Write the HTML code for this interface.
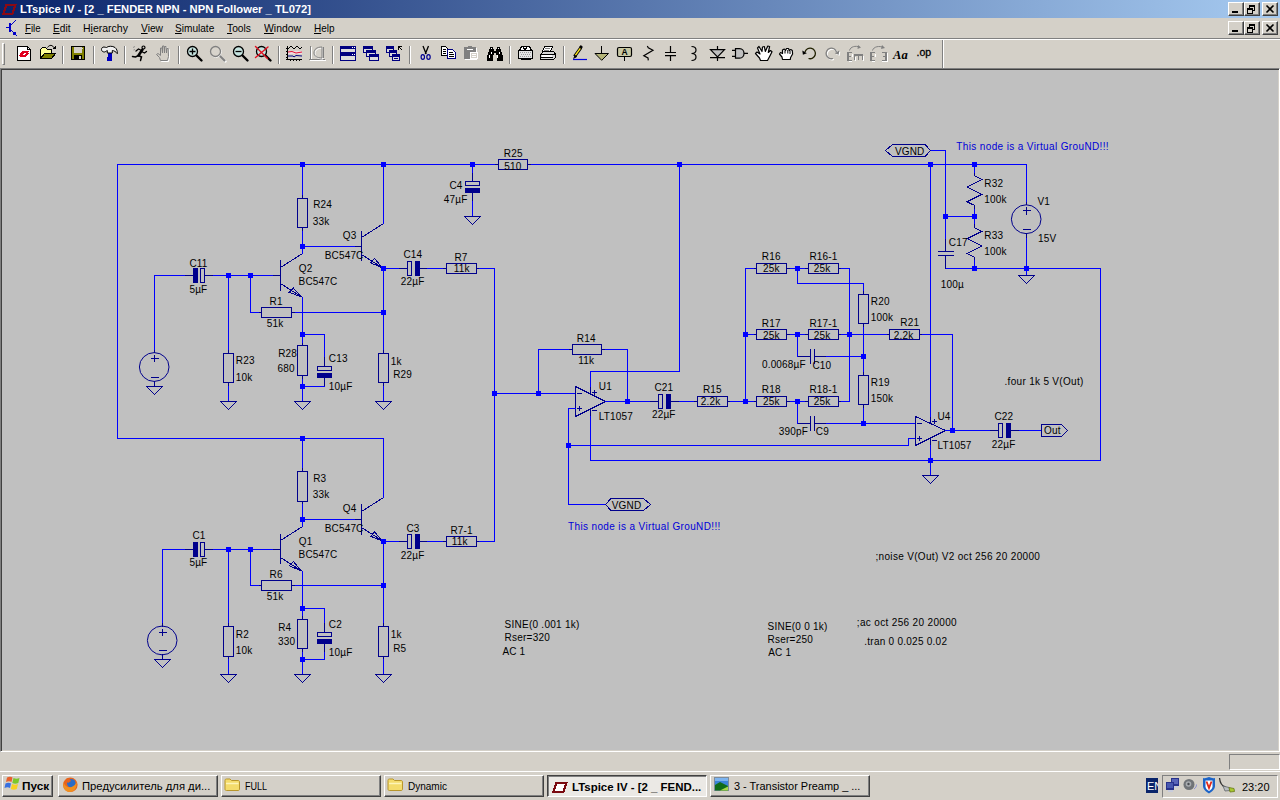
<!DOCTYPE html>
<html lang="ru">
<head>
<meta charset="utf-8">
<title>LTspice IV - [2 _ FENDER NPN - NPN Follower _ TL072]</title>
<style>
*{box-sizing:border-box;margin:0;padding:0}
html,body{width:1280px;height:800px;overflow:hidden;background:#d4d0c8}
body{position:relative;font-family:"Liberation Sans","DejaVu Sans",sans-serif;font-size:11px;color:#000}
.abs{position:absolute}
#title{left:0;top:0;width:1280px;height:18px;background:linear-gradient(90deg,#0a246a,#a6caf0)}
#title .cap{position:absolute;left:20px;top:2px;color:#fff;font-weight:bold;font-size:11px;line-height:14px;white-space:nowrap;transform-origin:0 50%;transform:scaleX(1.019)}
.wb{position:absolute;width:16px;height:14px;background:#d4d0c8;border:1px solid;border-color:#fff #404040 #404040 #fff;box-shadow:inset -1px -1px 0 #808080}
#menu{left:0;top:18px;width:1280px;height:20px;background:#d4d0c8}
#menu span{position:absolute;top:3px;font-size:11px;line-height:14px;white-space:nowrap;display:inline-block;transform-origin:0 50%}
#menu u{text-decoration:underline}
#tb{left:0;top:38px;width:1280px;height:30px;background:#d4d0c8;border-top:1px solid #808080}
#tb .hl{position:absolute;left:0;top:0;width:1280px;height:1px;background:#fff}
.sep{position:absolute;top:7px;width:2px;height:18px;border-left:1px solid #808080;border-right:1px solid #fff}
#mdi{left:0;top:68px;width:1280px;height:684px;background:#c0c0c0;border:1px solid;border-color:#808080 #fff #fff #808080;box-shadow:inset 1px 1px 0 #404040,inset -1px -1px 0 #d4d0c8}
#status{left:0;top:752px;width:1280px;height:19px;background:#d4d0c8}
#status .pn{position:absolute;left:1229px;top:2px;width:51px;height:16px;border:1px solid;border-color:#808080 #fff #fff #808080}
#task{left:0;top:771px;width:1280px;height:29px;background:#d4d0c8;border-top:1px solid #fff}
.tbtn{position:absolute;top:3px;height:22px;background:#d4d0c8;border:1px solid;border-color:#fff #404040 #404040 #fff;box-shadow:inset -1px -1px 0 #808080;font-size:11.3px;line-height:14px;white-space:nowrap;overflow:hidden}
.tbtn span{position:absolute;top:3px;display:inline-block;transform-origin:0 50%;font-size:11px}
.tbtn.dn{border-color:#404040 #fff #fff #404040;box-shadow:inset 1px 1px 0 #808080;background:#ebe9e5;font-weight:bold}
.tbtn.dn span{top:4px}
#tray{position:absolute;left:1162px;top:3px;width:116px;height:23px;border:1px solid;border-color:#808080 #fff #fff #808080}
#sch{position:absolute;left:0;top:0}
#sch .lb{font-family:"Liberation Sans","DejaVu Sans",sans-serif;font-size:10px;fill:#000;stroke:none;white-space:pre;letter-spacing:.15px}
#ico{position:absolute;left:0;top:0;pointer-events:none}

</style>
</head>
<body>
<div id="title" class="abs"><div class="cap">LTspice IV - [2 _ FENDER NPN - NPN Follower _ TL072]</div>
<div class="wb" style="left:1228px;top:2px"></div><div class="wb" style="left:1244px;top:2px"></div><div class="wb" style="left:1262px;top:2px"></div>
</div>
<div id="menu" class="abs">
<span style="left:25px;transform:scaleX(0.88)"><u>F</u>ile</span><span style="left:53px;transform:scaleX(0.92)"><u>E</u>dit</span><span style="left:83px;transform:scaleX(0.955)">H<u>i</u>erarchy</span><span style="left:141px;transform:scaleX(0.93)"><u>V</u>iew</span><span style="left:175px;transform:scaleX(0.917)"><u>S</u>imulate</span><span style="left:227px;transform:scaleX(0.934)"><u>T</u>ools</span><span style="left:264px;transform:scaleX(0.945)"><u>W</u>indow</span><span style="left:314px;transform:scaleX(0.907)"><u>H</u>elp</span>
<div class="wb" style="left:1228px;top:3px"></div><div class="wb" style="left:1244px;top:3px"></div><div class="wb" style="left:1262px;top:3px"></div>
</div>
<div id="tb" class="abs"><div class="hl"></div>
<div class="abs" style="left:2px;top:4px;width:3px;height:22px;border:1px solid;border-color:#fff #808080 #808080 #fff"></div>
<div class="sep" style="left:62px"></div><div class="sep" style="left:93px"></div><div class="sep" style="left:124px"></div><div class="sep" style="left:178px"></div><div class="sep" style="left:278px"></div><div class="sep" style="left:332px"></div><div class="sep" style="left:409px"></div><div class="sep" style="left:509px"></div><div class="sep" style="left:563px"></div>
<div class="abs" style="left:942px;top:1px;width:2px;height:28px;border-left:1px solid #808080;border-right:1px solid #fff"></div>
</div>
<div id="mdi" class="abs"></div>
<div id="status" class="abs"><div class="pn"></div></div>
<div id="task" class="abs">
<div class="tbtn" style="left:2px;width:51px;font-weight:bold"><span style="left:19px;transform:scaleX(1.07)">Пуск</span></div>
<div class="tbtn" style="left:58px;width:160px"><span style="left:23px;transform:scaleX(1.024)">Предусилитель для ди...</span></div>
<div class="tbtn" style="left:221px;width:160px"><span style="left:23px;transform:scaleX(.82)">FULL</span></div>
<div class="tbtn" style="left:384px;width:160px"><span style="left:23px;transform:scaleX(.91)">Dynamic</span></div>
<div class="tbtn dn" style="left:547px;width:160px"><span style="left:24px;transform:scaleX(1.04)">LTspice IV - [2 _ FEND...</span></div>
<div class="tbtn" style="left:710px;width:160px"><span style="left:23px;transform:scaleX(.994)">3 - Transistor Preamp _ ...</span></div>
<div id="tray"><span class="abs" style="left:79px;top:4px;font-size:11px;line-height:14px">23:20</span></div>
</div>
<svg id="sch" width="1280" height="800" viewBox="0 0 1280 800" shape-rendering="crispEdges" stroke-width="1">
<polyline points="302.5,164.5 117.5,164.5 117.5,438.5 383.5,438.5 383.5,497.5" stroke="#0000ff" fill="none" stroke-linecap="square"/>
<polyline points="302.5,164.5 494.5,164.5" stroke="#0000ff" fill="none" stroke-linecap="square"/>
<rect x="300" y="162" width="5" height="5" fill="#0000ff"/>
<rect x="381" y="162" width="5" height="5" fill="#0000ff"/>
<polyline points="383.5,164.5 383.5,223.5" stroke="#0000ff" fill="none" stroke-linecap="square"/>
<rect x="470" y="162" width="5" height="5" fill="#0000ff"/>
<polyline points="472.5,164.5 472.5,172.5" stroke="#0000ff" fill="none" stroke-linecap="square"/>
<line x1="472.5" y1="172.5" x2="472.5" y2="181.5" stroke="#00008c"/>
<rect x="465.5" y="181.5" width="14" height="4" stroke="#00008c" fill="none"/>
<rect x="465" y="188" width="15" height="5" fill="#00008c"/>
<line x1="472.5" y1="193" x2="472.5" y2="201.5" stroke="#00008c"/>
<polyline points="472.5,201.5 472.5,216.5" stroke="#0000ff" fill="none" stroke-linecap="square"/>
<polygon points="464.5,216.5 480.5,216.5 472.5,224.5" stroke="#00008c" fill="none"/>
<line x1="494.5" y1="164.5" x2="498.5" y2="164.5" stroke="#00008c"/>
<line x1="527.5" y1="164.5" x2="531.5" y2="164.5" stroke="#00008c"/>
<rect x="498.5" y="159.5" width="29" height="10" stroke="#00008c" fill="none"/>
<polyline points="531.5,164.5 1026.5,164.5 1026.5,201.5" stroke="#0000ff" fill="none" stroke-linecap="square"/>
<rect x="677" y="162" width="5" height="5" fill="#0000ff"/>
<rect x="928" y="162" width="5" height="5" fill="#0000ff"/>
<rect x="972" y="162" width="5" height="5" fill="#0000ff"/>
<rect x="300" y="436" width="5" height="5" fill="#0000ff"/>
<line x1="272.5" y1="275.5" x2="280.5" y2="275.5" stroke="#00008c"/>
<line x1="280.5" y1="260" x2="280.5" y2="291" stroke="#00008c"/>
<line x1="280.5" y1="267.5" x2="302.5" y2="253.5" stroke="#00008c"/>
<line x1="280.5" y1="283.5" x2="302.5" y2="297.5" stroke="#00008c"/>
<polygon points="293.4,288.12 289.29,292.36 301.5,297" stroke="#00008c" fill="none"/>
<line x1="354.5" y1="246.5" x2="361.5" y2="246.5" stroke="#00008c"/>
<line x1="361.5" y1="231" x2="361.5" y2="261" stroke="#00008c"/>
<line x1="361.5" y1="237.5" x2="383.5" y2="223.5" stroke="#00008c"/>
<line x1="361.5" y1="254.5" x2="383.5" y2="268.5" stroke="#00008c"/>
<polygon points="374.67,258.56 370.56,262.8 382.5,268" stroke="#00008c" fill="none"/>
<polyline points="302.5,164.5 302.5,194.5" stroke="#0000ff" fill="none" stroke-linecap="square"/>
<line x1="302.5" y1="194.5" x2="302.5" y2="198.5" stroke="#00008c"/>
<line x1="302.5" y1="227.5" x2="302.5" y2="231.5" stroke="#00008c"/>
<rect x="297.5" y="198.5" width="10" height="29" stroke="#00008c" fill="none"/>
<polyline points="302.5,231.5 302.5,253.5" stroke="#0000ff" fill="none" stroke-linecap="square"/>
<rect x="300" y="244" width="5" height="5" fill="#0000ff"/>
<polyline points="302.5,246.5 354.5,246.5" stroke="#0000ff" fill="none" stroke-linecap="square"/>
<rect x="381" y="266" width="5" height="5" fill="#0000ff"/>
<polyline points="383.5,268.5 398.5,268.5" stroke="#0000ff" fill="none" stroke-linecap="square"/>
<line x1="398.5" y1="268.5" x2="407.5" y2="268.5" stroke="#00008c"/>
<line x1="420" y1="268.5" x2="427.5" y2="268.5" stroke="#00008c"/>
<rect x="407.5" y="261.5" width="4" height="14" stroke="#00008c" fill="none"/>
<rect x="415" y="261" width="5" height="15" fill="#00008c"/>
<polyline points="427.5,268.5 442.5,268.5" stroke="#0000ff" fill="none" stroke-linecap="square"/>
<line x1="442.5" y1="268.5" x2="446.5" y2="268.5" stroke="#00008c"/>
<line x1="476.5" y1="268.5" x2="479.5" y2="268.5" stroke="#00008c"/>
<rect x="446.5" y="263.5" width="30" height="10" stroke="#00008c" fill="none"/>
<polyline points="479.5,268.5 494.5,268.5" stroke="#0000ff" fill="none" stroke-linecap="square"/>
<polyline points="383.5,268.5 383.5,349.5" stroke="#0000ff" fill="none" stroke-linecap="square"/>
<rect x="381" y="310" width="5" height="5" fill="#0000ff"/>
<line x1="383.5" y1="349.5" x2="383.5" y2="353.5" stroke="#00008c"/>
<line x1="383.5" y1="382.5" x2="383.5" y2="386.5" stroke="#00008c"/>
<rect x="378.5" y="353.5" width="10" height="29" stroke="#00008c" fill="none"/>
<polyline points="383.5,386.5 383.5,401.5" stroke="#0000ff" fill="none" stroke-linecap="square"/>
<polygon points="375.5,401.5 391.5,401.5 383.5,409.5" stroke="#00008c" fill="none"/>
<ellipse cx="154.2" cy="367.02" rx="14.8" ry="14.4" stroke="#00008c" fill="none" shape-rendering="auto"/>
<line x1="154.5" y1="349.5" x2="154.5" y2="353.24" stroke="#00008c"/>
<line x1="154.5" y1="381.02" x2="154.5" y2="386.5" stroke="#00008c"/>
<line x1="150.5" y1="358.5" x2="158.5" y2="358.5" stroke="#00008c"/>
<line x1="154.5" y1="355.09" x2="154.5" y2="362.48" stroke="#00008c"/>
<line x1="150.5" y1="377.5" x2="158.5" y2="377.5" stroke="#00008c"/>
<polygon points="146.5,386.5 162.5,386.5 154.5,394.5" stroke="#00008c" fill="none"/>
<polyline points="154.5,349.5 154.5,275.5 184.5,275.5" stroke="#0000ff" fill="none" stroke-linecap="square"/>
<line x1="184.5" y1="275.5" x2="193" y2="275.5" stroke="#00008c"/>
<line x1="204.5" y1="275.5" x2="213.5" y2="275.5" stroke="#00008c"/>
<rect x="193" y="268" width="5" height="15" fill="#00008c"/>
<rect x="200.5" y="268.5" width="4" height="14" stroke="#00008c" fill="none"/>
<polyline points="213.5,275.5 272.5,275.5" stroke="#0000ff" fill="none" stroke-linecap="square"/>
<rect x="226" y="273" width="5" height="5" fill="#0000ff"/>
<rect x="248" y="273" width="5" height="5" fill="#0000ff"/>
<polyline points="228.5,275.5 228.5,349.5" stroke="#0000ff" fill="none" stroke-linecap="square"/>
<line x1="228.5" y1="349.5" x2="228.5" y2="353.5" stroke="#00008c"/>
<line x1="228.5" y1="382.5" x2="228.5" y2="386.5" stroke="#00008c"/>
<rect x="223.5" y="353.5" width="10" height="29" stroke="#00008c" fill="none"/>
<polyline points="228.5,386.5 228.5,401.5" stroke="#0000ff" fill="none" stroke-linecap="square"/>
<polygon points="220.5,401.5 236.5,401.5 228.5,409.5" stroke="#00008c" fill="none"/>
<polyline points="250.5,275.5 250.5,312.5 258.5,312.5" stroke="#0000ff" fill="none" stroke-linecap="square"/>
<line x1="258.5" y1="312.5" x2="261.5" y2="312.5" stroke="#00008c"/>
<line x1="291.5" y1="312.5" x2="295.5" y2="312.5" stroke="#00008c"/>
<rect x="261.5" y="307.5" width="30" height="10" stroke="#00008c" fill="none"/>
<polyline points="295.5,312.5 383.5,312.5" stroke="#0000ff" fill="none" stroke-linecap="square"/>
<polyline points="302.5,297.5 302.5,342.5" stroke="#0000ff" fill="none" stroke-linecap="square"/>
<rect x="300" y="332" width="5" height="5" fill="#0000ff"/>
<line x1="302.5" y1="342.5" x2="302.5" y2="345.5" stroke="#00008c"/>
<line x1="302.5" y1="375.5" x2="302.5" y2="379.5" stroke="#00008c"/>
<rect x="297.5" y="345.5" width="10" height="30" stroke="#00008c" fill="none"/>
<polyline points="302.5,379.5 302.5,401.5" stroke="#0000ff" fill="none" stroke-linecap="square"/>
<rect x="300" y="384" width="5" height="5" fill="#0000ff"/>
<polygon points="294.5,401.5 310.5,401.5 302.5,409.5" stroke="#00008c" fill="none"/>
<polyline points="302.5,334.5 324.5,334.5 324.5,356.5" stroke="#0000ff" fill="none" stroke-linecap="square"/>
<line x1="324.5" y1="356.5" x2="324.5" y2="366.5" stroke="#00008c"/>
<rect x="317.5" y="366.5" width="14" height="4" stroke="#00008c" fill="none"/>
<rect x="317" y="373" width="15" height="5" fill="#00008c"/>
<line x1="324.5" y1="378" x2="324.5" y2="386.5" stroke="#00008c"/>
<polyline points="324.5,386.5 324.5,386.5 302.5,386.5" stroke="#0000ff" fill="none" stroke-linecap="square"/>
<line x1="272.5" y1="549.5" x2="280.5" y2="549.5" stroke="#00008c"/>
<line x1="280.5" y1="534" x2="280.5" y2="564" stroke="#00008c"/>
<line x1="280.5" y1="540.5" x2="302.5" y2="526.5" stroke="#00008c"/>
<line x1="280.5" y1="557.5" x2="302.5" y2="571.5" stroke="#00008c"/>
<polygon points="293.4,561.54 289.29,565.79 301.5,571" stroke="#00008c" fill="none"/>
<line x1="354.5" y1="519.5" x2="361.5" y2="519.5" stroke="#00008c"/>
<line x1="361.5" y1="504" x2="361.5" y2="535" stroke="#00008c"/>
<line x1="361.5" y1="511.5" x2="383.5" y2="497.5" stroke="#00008c"/>
<line x1="361.5" y1="527.5" x2="383.5" y2="541.5" stroke="#00008c"/>
<polygon points="374.67,531.99 370.56,536.23 382.5,541" stroke="#00008c" fill="none"/>
<polyline points="302.5,438.5 302.5,467.5" stroke="#0000ff" fill="none" stroke-linecap="square"/>
<line x1="302.5" y1="467.5" x2="302.5" y2="471.5" stroke="#00008c"/>
<line x1="302.5" y1="501.5" x2="302.5" y2="504.5" stroke="#00008c"/>
<rect x="297.5" y="471.5" width="10" height="30" stroke="#00008c" fill="none"/>
<polyline points="302.5,504.5 302.5,526.5" stroke="#0000ff" fill="none" stroke-linecap="square"/>
<rect x="300" y="517" width="5" height="5" fill="#0000ff"/>
<polyline points="302.5,519.5 354.5,519.5" stroke="#0000ff" fill="none" stroke-linecap="square"/>
<rect x="381" y="539" width="5" height="5" fill="#0000ff"/>
<polyline points="383.5,541.5 398.5,541.5" stroke="#0000ff" fill="none" stroke-linecap="square"/>
<line x1="398.5" y1="541.5" x2="407.5" y2="541.5" stroke="#00008c"/>
<line x1="420" y1="541.5" x2="427.5" y2="541.5" stroke="#00008c"/>
<rect x="407.5" y="534.5" width="4" height="14" stroke="#00008c" fill="none"/>
<rect x="415" y="534" width="5" height="15" fill="#00008c"/>
<polyline points="427.5,541.5 442.5,541.5" stroke="#0000ff" fill="none" stroke-linecap="square"/>
<line x1="442.5" y1="541.5" x2="446.5" y2="541.5" stroke="#00008c"/>
<line x1="476.5" y1="541.5" x2="479.5" y2="541.5" stroke="#00008c"/>
<rect x="446.5" y="536.5" width="30" height="10" stroke="#00008c" fill="none"/>
<polyline points="479.5,541.5 494.5,541.5" stroke="#0000ff" fill="none" stroke-linecap="square"/>
<polyline points="383.5,541.5 383.5,622.5" stroke="#0000ff" fill="none" stroke-linecap="square"/>
<rect x="381" y="583" width="5" height="5" fill="#0000ff"/>
<line x1="383.5" y1="622.5" x2="383.5" y2="626.5" stroke="#00008c"/>
<line x1="383.5" y1="656.5" x2="383.5" y2="659.5" stroke="#00008c"/>
<rect x="378.5" y="626.5" width="10" height="30" stroke="#00008c" fill="none"/>
<polyline points="383.5,659.5 383.5,674.5" stroke="#0000ff" fill="none" stroke-linecap="square"/>
<polygon points="375.5,674.5 391.5,674.5 383.5,682.5" stroke="#00008c" fill="none"/>
<ellipse cx="162.2" cy="640.45" rx="14.8" ry="14.4" stroke="#00008c" fill="none" shape-rendering="auto"/>
<line x1="162.5" y1="622.5" x2="162.5" y2="626.67" stroke="#00008c"/>
<line x1="162.5" y1="654.45" x2="162.5" y2="659.5" stroke="#00008c"/>
<line x1="158.5" y1="632.5" x2="166.5" y2="632.5" stroke="#00008c"/>
<line x1="162.5" y1="628.52" x2="162.5" y2="635.91" stroke="#00008c"/>
<line x1="158.5" y1="650.5" x2="166.5" y2="650.5" stroke="#00008c"/>
<polygon points="154.5,659.5 170.5,659.5 162.5,667.5" stroke="#00008c" fill="none"/>
<polyline points="162.5,622.5 162.5,549.5 184.5,549.5" stroke="#0000ff" fill="none" stroke-linecap="square"/>
<line x1="184.5" y1="549.5" x2="193" y2="549.5" stroke="#00008c"/>
<line x1="204.5" y1="549.5" x2="213.5" y2="549.5" stroke="#00008c"/>
<rect x="193" y="542" width="5" height="15" fill="#00008c"/>
<rect x="200.5" y="542.5" width="4" height="14" stroke="#00008c" fill="none"/>
<polyline points="213.5,549.5 272.5,549.5" stroke="#0000ff" fill="none" stroke-linecap="square"/>
<rect x="226" y="547" width="5" height="5" fill="#0000ff"/>
<rect x="248" y="547" width="5" height="5" fill="#0000ff"/>
<polyline points="228.5,549.5 228.5,622.5" stroke="#0000ff" fill="none" stroke-linecap="square"/>
<line x1="228.5" y1="622.5" x2="228.5" y2="626.5" stroke="#00008c"/>
<line x1="228.5" y1="656.5" x2="228.5" y2="659.5" stroke="#00008c"/>
<rect x="223.5" y="626.5" width="10" height="30" stroke="#00008c" fill="none"/>
<polyline points="228.5,659.5 228.5,674.5" stroke="#0000ff" fill="none" stroke-linecap="square"/>
<polygon points="220.5,674.5 236.5,674.5 228.5,682.5" stroke="#00008c" fill="none"/>
<polyline points="250.5,549.5 250.5,585.5 258.5,585.5" stroke="#0000ff" fill="none" stroke-linecap="square"/>
<line x1="258.5" y1="585.5" x2="261.5" y2="585.5" stroke="#00008c"/>
<line x1="291.5" y1="585.5" x2="295.5" y2="585.5" stroke="#00008c"/>
<rect x="261.5" y="580.5" width="30" height="10" stroke="#00008c" fill="none"/>
<polyline points="295.5,585.5 383.5,585.5" stroke="#0000ff" fill="none" stroke-linecap="square"/>
<polyline points="302.5,571.5 302.5,615.5" stroke="#0000ff" fill="none" stroke-linecap="square"/>
<rect x="300" y="606" width="5" height="5" fill="#0000ff"/>
<line x1="302.5" y1="615.5" x2="302.5" y2="619.5" stroke="#00008c"/>
<line x1="302.5" y1="648.5" x2="302.5" y2="652.5" stroke="#00008c"/>
<rect x="297.5" y="619.5" width="10" height="29" stroke="#00008c" fill="none"/>
<polyline points="302.5,652.5 302.5,674.5" stroke="#0000ff" fill="none" stroke-linecap="square"/>
<rect x="300" y="657" width="5" height="5" fill="#0000ff"/>
<polygon points="294.5,674.5 310.5,674.5 302.5,682.5" stroke="#00008c" fill="none"/>
<polyline points="302.5,608.5 324.5,608.5 324.5,622.5" stroke="#0000ff" fill="none" stroke-linecap="square"/>
<line x1="324.5" y1="622.5" x2="324.5" y2="632.5" stroke="#00008c"/>
<rect x="317.5" y="632.5" width="14" height="4" stroke="#00008c" fill="none"/>
<rect x="317" y="639" width="15" height="5" fill="#00008c"/>
<line x1="324.5" y1="644" x2="324.5" y2="652.5" stroke="#00008c"/>
<polyline points="324.5,652.5 324.5,659.5 302.5,659.5" stroke="#0000ff" fill="none" stroke-linecap="square"/>
<polyline points="494.5,268.5 494.5,541.5" stroke="#0000ff" fill="none" stroke-linecap="square"/>
<rect x="492" y="391" width="5" height="5" fill="#0000ff"/>
<polyline points="494.5,393.5 575.5,393.5" stroke="#0000ff" fill="none" stroke-linecap="square"/>
<rect x="536" y="391" width="5" height="5" fill="#0000ff"/>
<polyline points="538.5,393.5 538.5,349.5 568.5,349.5" stroke="#0000ff" fill="none" stroke-linecap="square"/>
<line x1="568.5" y1="349.5" x2="572.5" y2="349.5" stroke="#00008c"/>
<line x1="601.5" y1="349.5" x2="605.5" y2="349.5" stroke="#00008c"/>
<rect x="572.5" y="344.5" width="29" height="10" stroke="#00008c" fill="none"/>
<polyline points="605.5,349.5 627.5,349.5 627.5,401.5" stroke="#0000ff" fill="none" stroke-linecap="square"/>
<rect x="625" y="399" width="5" height="5" fill="#0000ff"/>
<polygon points="575.5,386.5 605.5,401.5 575.5,416.5" stroke="#00008c" fill="none"/>
<line x1="590.5" y1="386.5" x2="590.5" y2="393.5" stroke="#00008c"/>
<line x1="590.5" y1="416.5" x2="590.5" y2="408.5" stroke="#00008c"/>
<line x1="577" y1="393.5" x2="582" y2="393.5" stroke="#00008c"/>
<line x1="577" y1="408.5" x2="582" y2="408.5" stroke="#00008c"/>
<line x1="579.5" y1="406" x2="579.5" y2="411" stroke="#00008c"/>
<line x1="592" y1="392.5" x2="597" y2="392.5" stroke="#00008c"/>
<line x1="594.5" y1="390" x2="594.5" y2="395" stroke="#00008c"/>
<line x1="592" y1="410.5" x2="597" y2="410.5" stroke="#00008c"/>
<polyline points="605.5,401.5 649.5,401.5" stroke="#0000ff" fill="none" stroke-linecap="square"/>
<line x1="649.5" y1="401.5" x2="658.5" y2="401.5" stroke="#00008c"/>
<line x1="671" y1="401.5" x2="679.5" y2="401.5" stroke="#00008c"/>
<rect x="658.5" y="394.5" width="4" height="14" stroke="#00008c" fill="none"/>
<rect x="666" y="394" width="5" height="15" fill="#00008c"/>
<polyline points="679.5,401.5 693.5,401.5" stroke="#0000ff" fill="none" stroke-linecap="square"/>
<line x1="693.5" y1="401.5" x2="697.5" y2="401.5" stroke="#00008c"/>
<line x1="727.5" y1="401.5" x2="730.5" y2="401.5" stroke="#00008c"/>
<rect x="697.5" y="396.5" width="30" height="10" stroke="#00008c" fill="none"/>
<polyline points="730.5,401.5 753.5,401.5" stroke="#0000ff" fill="none" stroke-linecap="square"/>
<rect x="743" y="399" width="5" height="5" fill="#0000ff"/>
<polyline points="590.5,386.5 590.5,371.5 679.5,371.5 679.5,164.5" stroke="#0000ff" fill="none" stroke-linecap="square"/>
<polyline points="590.5,416.5 590.5,460.5 1100.5,460.5 1100.5,268.5 945.5,268.5 945.5,268.5" stroke="#0000ff" fill="none" stroke-linecap="square"/>
<polyline points="575.5,408.5 568.5,408.5 568.5,504.5 605.5,504.5" stroke="#0000ff" fill="none" stroke-linecap="square"/>
<rect x="566" y="443" width="5" height="5" fill="#0000ff"/>
<polyline points="568.5,445.5 908.5,445.5 908.5,438.5 915.5,438.5" stroke="#0000ff" fill="none" stroke-linecap="square"/>
<polyline points="745.5,401.5 745.5,268.5 753.5,268.5" stroke="#0000ff" fill="none" stroke-linecap="square"/>
<rect x="743" y="332" width="5" height="5" fill="#0000ff"/>
<line x1="753.5" y1="268.5" x2="756.5" y2="268.5" stroke="#00008c"/>
<line x1="786.5" y1="268.5" x2="790.5" y2="268.5" stroke="#00008c"/>
<rect x="756.5" y="263.5" width="30" height="10" stroke="#00008c" fill="none"/>
<polyline points="790.5,268.5 804.5,268.5" stroke="#0000ff" fill="none" stroke-linecap="square"/>
<rect x="795" y="266" width="5" height="5" fill="#0000ff"/>
<line x1="804.5" y1="268.5" x2="808.5" y2="268.5" stroke="#00008c"/>
<line x1="838.5" y1="268.5" x2="841.5" y2="268.5" stroke="#00008c"/>
<rect x="808.5" y="263.5" width="30" height="10" stroke="#00008c" fill="none"/>
<polyline points="841.5,268.5 849.5,268.5" stroke="#0000ff" fill="none" stroke-linecap="square"/>
<line x1="753.5" y1="334.5" x2="756.5" y2="334.5" stroke="#00008c"/>
<line x1="786.5" y1="334.5" x2="790.5" y2="334.5" stroke="#00008c"/>
<rect x="756.5" y="329.5" width="30" height="10" stroke="#00008c" fill="none"/>
<polyline points="790.5,334.5 804.5,334.5" stroke="#0000ff" fill="none" stroke-linecap="square"/>
<rect x="795" y="332" width="5" height="5" fill="#0000ff"/>
<line x1="804.5" y1="334.5" x2="808.5" y2="334.5" stroke="#00008c"/>
<line x1="838.5" y1="334.5" x2="841.5" y2="334.5" stroke="#00008c"/>
<rect x="808.5" y="329.5" width="30" height="10" stroke="#00008c" fill="none"/>
<polyline points="841.5,334.5 849.5,334.5" stroke="#0000ff" fill="none" stroke-linecap="square"/>
<line x1="753.5" y1="401.5" x2="756.5" y2="401.5" stroke="#00008c"/>
<line x1="786.5" y1="401.5" x2="790.5" y2="401.5" stroke="#00008c"/>
<rect x="756.5" y="396.5" width="30" height="10" stroke="#00008c" fill="none"/>
<polyline points="790.5,401.5 804.5,401.5" stroke="#0000ff" fill="none" stroke-linecap="square"/>
<rect x="795" y="399" width="5" height="5" fill="#0000ff"/>
<line x1="804.5" y1="401.5" x2="808.5" y2="401.5" stroke="#00008c"/>
<line x1="838.5" y1="401.5" x2="841.5" y2="401.5" stroke="#00008c"/>
<rect x="808.5" y="396.5" width="30" height="10" stroke="#00008c" fill="none"/>
<polyline points="841.5,401.5 849.5,401.5" stroke="#0000ff" fill="none" stroke-linecap="square"/>
<polyline points="745.5,334.5 753.5,334.5" stroke="#0000ff" fill="none" stroke-linecap="square"/>
<polyline points="849.5,268.5 849.5,401.5" stroke="#0000ff" fill="none" stroke-linecap="square"/>
<rect x="847" y="332" width="5" height="5" fill="#0000ff"/>
<polyline points="849.5,334.5 886.5,334.5" stroke="#0000ff" fill="none" stroke-linecap="square"/>
<line x1="886.5" y1="334.5" x2="889.5" y2="334.5" stroke="#00008c"/>
<line x1="919.5" y1="334.5" x2="922.5" y2="334.5" stroke="#00008c"/>
<rect x="889.5" y="329.5" width="30" height="10" stroke="#00008c" fill="none"/>
<polyline points="922.5,334.5 952.5,334.5 952.5,430.5" stroke="#0000ff" fill="none" stroke-linecap="square"/>
<rect x="950" y="428" width="5" height="5" fill="#0000ff"/>
<polyline points="797.5,268.5 797.5,283.5 863.5,283.5 863.5,290.5" stroke="#0000ff" fill="none" stroke-linecap="square"/>
<line x1="863.5" y1="290.5" x2="863.5" y2="294.5" stroke="#00008c"/>
<line x1="863.5" y1="323.5" x2="863.5" y2="327.5" stroke="#00008c"/>
<rect x="858.5" y="294.5" width="10" height="29" stroke="#00008c" fill="none"/>
<polyline points="863.5,327.5 863.5,371.5" stroke="#0000ff" fill="none" stroke-linecap="square"/>
<rect x="861" y="354" width="5" height="5" fill="#0000ff"/>
<line x1="863.5" y1="371.5" x2="863.5" y2="375.5" stroke="#00008c"/>
<line x1="863.5" y1="404.5" x2="863.5" y2="408.5" stroke="#00008c"/>
<rect x="858.5" y="375.5" width="10" height="29" stroke="#00008c" fill="none"/>
<polyline points="863.5,408.5 863.5,423.5" stroke="#0000ff" fill="none" stroke-linecap="square"/>
<rect x="861" y="421" width="5" height="5" fill="#0000ff"/>
<polyline points="797.5,334.5 797.5,356.5" stroke="#0000ff" fill="none" stroke-linecap="square"/>
<line x1="797.5" y1="356.5" x2="810.5" y2="356.5" stroke="#00008c"/>
<line x1="814.5" y1="356.5" x2="826.5" y2="356.5" stroke="#00008c"/>
<line x1="810.5" y1="349" x2="810.5" y2="364" stroke="#00008c"/>
<line x1="814.5" y1="349" x2="814.5" y2="364" stroke="#00008c"/>
<polyline points="826.5,356.5 863.5,356.5" stroke="#0000ff" fill="none" stroke-linecap="square"/>
<polyline points="797.5,401.5 797.5,423.5" stroke="#0000ff" fill="none" stroke-linecap="square"/>
<line x1="797.5" y1="423.5" x2="810.5" y2="423.5" stroke="#00008c"/>
<line x1="814.5" y1="423.5" x2="826.5" y2="423.5" stroke="#00008c"/>
<line x1="810.5" y1="416" x2="810.5" y2="431" stroke="#00008c"/>
<line x1="814.5" y1="416" x2="814.5" y2="431" stroke="#00008c"/>
<polyline points="826.5,423.5 915.5,423.5" stroke="#0000ff" fill="none" stroke-linecap="square"/>
<polygon points="915.5,416.5 945.5,430.5 915.5,445.5" stroke="#00008c" fill="none"/>
<line x1="930.5" y1="416.5" x2="930.5" y2="423.5" stroke="#00008c"/>
<line x1="930.5" y1="445.5" x2="930.5" y2="438.5" stroke="#00008c"/>
<line x1="917" y1="423.5" x2="922" y2="423.5" stroke="#00008c"/>
<line x1="917" y1="438.5" x2="922" y2="438.5" stroke="#00008c"/>
<line x1="919.5" y1="436" x2="919.5" y2="441" stroke="#00008c"/>
<line x1="932" y1="421.5" x2="937" y2="421.5" stroke="#00008c"/>
<line x1="934.5" y1="419" x2="934.5" y2="424" stroke="#00008c"/>
<line x1="932" y1="440.5" x2="937" y2="440.5" stroke="#00008c"/>
<polyline points="930.5,164.5 930.5,416.5" stroke="#0000ff" fill="none" stroke-linecap="square"/>
<polyline points="930.5,445.5 930.5,475.5" stroke="#0000ff" fill="none" stroke-linecap="square"/>
<rect x="928" y="458" width="5" height="5" fill="#0000ff"/>
<polygon points="922.5,475.5 938.5,475.5 930.5,483.5" stroke="#00008c" fill="none"/>
<polyline points="945.5,430.5 989.5,430.5" stroke="#0000ff" fill="none" stroke-linecap="square"/>
<line x1="989.5" y1="430.5" x2="998.5" y2="430.5" stroke="#00008c"/>
<line x1="1011" y1="430.5" x2="1019.5" y2="430.5" stroke="#00008c"/>
<rect x="998.5" y="423.5" width="4" height="14" stroke="#00008c" fill="none"/>
<rect x="1006" y="423" width="5" height="15" fill="#00008c"/>
<polyline points="1019.5,430.5 1041.5,430.5" stroke="#0000ff" fill="none" stroke-linecap="square"/>
<polygon points="1041.5,424.5 1061.5,424.5 1067.5,430.5 1061.5,436.5 1041.5,436.5" stroke="#00008c" fill="none"/>
<polyline points="974.5,164.5 974.5,172.5" stroke="#0000ff" fill="none" stroke-linecap="square"/>
<polyline points="974.5,172.5 974.5,175.88 981.89,179.58 967.11,186.97 981.89,194.36 967.11,201.75 974.5,205.44 974.5,209.5" stroke="#00008c" fill="none"/>
<polyline points="974.5,209.5 974.5,223.5" stroke="#0000ff" fill="none" stroke-linecap="square"/>
<rect x="972" y="214" width="5" height="5" fill="#0000ff"/>
<polyline points="974.5,223.5 974.5,227.61 981.89,231.31 967.11,238.7 981.89,246.09 967.11,253.48 974.5,257.17 974.5,260.5" stroke="#00008c" fill="none"/>
<polyline points="974.5,260.5 974.5,268.5" stroke="#0000ff" fill="none" stroke-linecap="square"/>
<rect x="972" y="266" width="5" height="5" fill="#0000ff"/>
<rect x="943" y="214" width="5" height="5" fill="#0000ff"/>
<polyline points="945.5,216.5 974.5,216.5" stroke="#0000ff" fill="none" stroke-linecap="square"/>
<polyline points="930.5,150.5 945.5,150.5 945.5,238.5" stroke="#0000ff" fill="none"/>
<line x1="945.5" y1="238.5" x2="945.5" y2="251.5" stroke="#00008c"/>
<line x1="945.5" y1="255.5" x2="945.5" y2="268.5" stroke="#00008c"/>
<line x1="937.5" y1="251.5" x2="953.5" y2="251.5" stroke="#00008c"/>
<line x1="937.5" y1="255.5" x2="953.5" y2="255.5" stroke="#00008c"/>
<rect x="1024" y="266" width="5" height="5" fill="#0000ff"/>
<ellipse cx="1026.2" cy="219.22" rx="14.8" ry="14.4" stroke="#00008c" fill="none" shape-rendering="auto"/>
<line x1="1026.5" y1="201.5" x2="1026.5" y2="205.44" stroke="#00008c"/>
<line x1="1026.5" y1="233.22" x2="1026.5" y2="238.5" stroke="#00008c"/>
<line x1="1022.5" y1="210.5" x2="1030.5" y2="210.5" stroke="#00008c"/>
<line x1="1026.5" y1="207.29" x2="1026.5" y2="214.68" stroke="#00008c"/>
<line x1="1022.5" y1="229.5" x2="1030.5" y2="229.5" stroke="#00008c"/>
<polyline points="1026.5,238.5 1026.5,275.5" stroke="#0000ff" fill="none" stroke-linecap="square"/>
<polygon points="1018.5,275.5 1034.5,275.5 1026.5,283.5" stroke="#00008c" fill="none"/>
<polygon points="885.5,150.5 892.5,144.5 925,144.5 930.5,150.5 925,156.5 892.5,156.5" stroke="#00008c" fill="none"/>
<polygon points="605.5,504.5 611,498.5 643.5,498.5 650.5,504.5 643.5,510.5 611,510.5" stroke="#00008c" fill="none"/>
<g class="lb">
<text x="313.2" y="208.4">R24</text>
<text x="312.8" y="225">33k</text>
<text x="342.8" y="239">Q3</text>
<text x="324.8" y="259">BC547C</text>
<text x="298.8" y="271.9">Q2</text>
<text x="298.6" y="285.1">BC547C</text>
<text x="189.5" y="266.7">C11</text>
<text x="189.5" y="292.9">5µF</text>
<text x="269.6" y="305.1">R1</text>
<text x="266.8" y="327.1">51k</text>
<text x="403.5" y="258">C14</text>
<text x="400.8" y="285.1">22µF</text>
<text x="235.8" y="364.2">R23</text>
<text x="235.8" y="381.2">10k</text>
<text x="278.2" y="357.2">R28</text>
<text x="277.5" y="372.2">680</text>
<text x="328.8" y="362.2">C13</text>
<text x="328.8" y="389.7">10µF</text>
<text x="390.8" y="365.4">1k</text>
<text x="393.2" y="377.9">R29</text>
<text x="313.2" y="482.2">R3</text>
<text x="312.8" y="497.9">33k</text>
<text x="342.8" y="512.2">Q4</text>
<text x="324.8" y="532.2">BC547C</text>
<text x="298.8" y="544.9">Q1</text>
<text x="298.6" y="557.9">BC547C</text>
<text x="192.5" y="539.2">C1</text>
<text x="189.5" y="565.9">5µF</text>
<text x="269.6" y="578.4">R6</text>
<text x="266.8" y="600.4">51k</text>
<text x="406.5" y="532.2">C3</text>
<text x="400.8" y="559.2">22µF</text>
<text x="235.8" y="637.9">R2</text>
<text x="235.8" y="653.7">10k</text>
<text x="278.2" y="630.9">R4</text>
<text x="278" y="644.9">330</text>
<text x="328.8" y="628.4">C2</text>
<text x="328.8" y="656.2">10µF</text>
<text x="390.8" y="637.9">1k</text>
<text x="393.2" y="651.7">R5</text>
<text x="503.8" y="157.2">R25</text>
<text x="504.3" y="169.7">510</text>
<text x="449.5" y="189.2">C4</text>
<text x="443.8" y="203.4">47µF</text>
<text x="454.5" y="261.2">R7</text>
<text x="453.8" y="272.2">11k</text>
<text x="450.5" y="533.7">R7-1</text>
<text x="451.8" y="544.9">11k</text>
<text x="576.8" y="341.7">R14</text>
<text x="578.3" y="364.2">11k</text>
<text x="598.8" y="389.9">U1</text>
<text x="598.8" y="419.9">LT1057</text>
<text x="654.5" y="391.2">C21</text>
<text x="652" y="418.4">22µF</text>
<text x="611.8" y="508.6">VGND</text>
<text x="761.8" y="260.4">R16</text>
<text x="763" y="272.2">25k</text>
<text x="809.5" y="260.4">R16-1</text>
<text x="813.8" y="272.2">25k</text>
<text x="761.8" y="326.7">R17</text>
<text x="763" y="338.7">25k</text>
<text x="809.5" y="326.7">R17-1</text>
<text x="813.8" y="338.7">25k</text>
<text x="761.8" y="393.4">R18</text>
<text x="763" y="405.4">25k</text>
<text x="809.5" y="393.4">R18-1</text>
<text x="813.8" y="405.4">25k</text>
<text x="870.8" y="304.9">R20</text>
<text x="870.8" y="321.2">100k</text>
<text x="870.8" y="385.7">R19</text>
<text x="870.8" y="402.2">150k</text>
<text x="900.3" y="326.2">R21</text>
<text x="893.8" y="339.2">2.2k</text>
<text x="703" y="393.4">R15</text>
<text x="700.8" y="404.7">2.2k</text>
<text x="762" y="367.9">0.0068µF</text>
<text x="812.5" y="368.7">C10</text>
<text x="778.8" y="434.9">390pF</text>
<text x="815.8" y="434.9">C9</text>
<text x="937.5" y="419.9">U4</text>
<text x="937.5" y="448.7">LT1057</text>
<text x="994.5" y="420.4">C22</text>
<text x="991.8" y="447.9">22µF</text>
<text x="1044" y="434.4">Out</text>
<text x="895" y="154.6">VGND</text>
<text x="984.3" y="187.4">R32</text>
<text x="984.3" y="203.4">100k</text>
<text x="984.3" y="238.7">R33</text>
<text x="984.3" y="254.9">100k</text>
<text x="948.8" y="246.2">C17</text>
<text x="940.8" y="287.9">100µ</text>
<text x="1037.5" y="204.9">V1</text>
<text x="1038" y="242.2">15V</text>
<text x="956.3" y="149.5" textLength="152.5" fill="#0000d8">This node is a Virtual GrouND!!!</text>
<text x="568" y="529.6" textLength="152.5" fill="#0000d8">This node is a Virtual GrouND!!!</text>
<text x="1004.5" y="385" textLength="79">.four 1k 5 V(Out)</text>
<text x="875.5" y="559.5" textLength="164.5">;noise V(Out) V2 oct 256 20 20000</text>
<text x="856.8" y="625.5" textLength="100">;ac oct 256 20 20000</text>
<text x="864.3" y="644.5" textLength="82.8">.tran 0 0.025 0.02</text>
<text x="504.5" y="627.5" textLength="75">SINE(0 .001 1k)</text>
<text x="504.5" y="640.5" textLength="45.5">Rser=320</text>
<text x="502.5" y="654.5">AC 1</text>
<text x="767.5" y="629.5" textLength="60">SINE(0 0 1k)</text>
<text x="767.5" y="642.5" textLength="45.5">Rser=250</text>
<text x="768.3" y="655.5">AC 1</text>
</g>
</svg>
<svg id="ico" width="1280" height="800" viewBox="0 0 1280 800">
<g shape-rendering="crispEdges">
<!-- title icon (LT logo) -->
<polygon points="6.5,4.5 15.5,4.5 12.5,13.5 3.5,13.5" fill="none" stroke="#8a0a14" stroke-width="2"/>
<!-- taskbar LT icon -->
<polygon points="556.5,782.5 566.5,782.5 563.5,791.5 553.5,791.5" fill="#fff" stroke="#7a0a10" stroke-width="2"/>
<!-- menu icon : transistor -->
<g stroke="#0000c8" fill="none">
<line x1="6" y1="27.5" x2="10" y2="27.5"/>
<line x1="10" y1="23" x2="10" y2="32" stroke-width="2"/>
<line x1="10.5" y1="25.5" x2="16" y2="20"/>
<line x1="10.5" y1="29.5" x2="17" y2="36"/>
<polygon points="13,34 15,32 16,35" fill="#0000c8"/>
</g>
<!-- window buttons glyphs : title bar -->
<g fill="#000">
<rect x="1232" y="11" width="6" height="2"/>
<rect x="1249" y="5" width="6" height="2"/><rect x="1249" y="6" width="1" height="5"/><rect x="1254" y="6" width="1" height="5"/><rect x="1252" y="10" width="3" height="1"/>
<rect x="1247" y="8" width="6" height="2"/><rect x="1247" y="9" width="1" height="5"/><rect x="1252" y="9" width="1" height="5"/><rect x="1247" y="13" width="6" height="1"/>
<rect x="1232" y="30" width="6" height="2"/>
<rect x="1249" y="24" width="6" height="2"/><rect x="1249" y="25" width="1" height="5"/><rect x="1254" y="25" width="1" height="5"/><rect x="1252" y="29" width="3" height="1"/>
<rect x="1247" y="27" width="6" height="2"/><rect x="1247" y="28" width="1" height="5"/><rect x="1252" y="28" width="1" height="5"/><rect x="1247" y="32" width="6" height="1"/>
</g>
<g fill="#d4d0c8"><rect x="1248" y="10" width="4" height="3"/><rect x="1248" y="29" width="4" height="3"/></g>
</g>
<g stroke="#000" stroke-width="1.6" fill="none">
<path d="M1266.5 5.5l7 7M1273.5 5.5l-7 7"/>
<path d="M1266.5 24.5l7 7M1273.5 24.5l-7 7"/>
</g>
<!-- ================= toolbar icons ================= -->
<g shape-rendering="crispEdges">
<!-- new schematic -->
<polygon points="17.5,46.5 27.5,46.5 30.5,49.5 30.5,60.5 17.5,60.5" fill="#fff" stroke="#000"/>
<polyline points="27.5,46.5 27.5,49.5 30.5,49.5" fill="none" stroke="#000"/>
<polygon points="22,51 29,51 27,53 24,53 22,56 19,56" fill="#e00020"/>
<polygon points="26,53 29,53 26,57 19,57 21,55 24,55" fill="#e00020"/>
<!-- open -->
<polygon points="40.5,58.5 40.5,49.5 42.5,47.5 45.5,47.5 47.5,49.5 51.5,49.5 51.5,53.5" fill="#ffff99" stroke="#000"/>
<polygon points="40.5,58.5 44.5,53.5 55.5,53.5 51.5,58.5" fill="#808000" stroke="#000"/>
<path d="M47.5 47.5c2-3 5-3 7 1" fill="none" stroke="#000" shape-rendering="auto"/>
<polygon points="52,49 56,49 56,45" fill="#000"/>
<!-- save -->
<rect x="71.5" y="46.5" width="13" height="13" fill="#808000" stroke="#000"/>
<rect x="74" y="47" width="8" height="6" fill="#d4d0c8"/>
<rect x="74" y="55" width="8" height="4" fill="#000"/>
<rect x="79" y="56" width="2" height="3" fill="#d4d0c8"/>
<rect x="82" y="48" width="1" height="1" fill="#d4d0c8"/>
<!-- hammer -->
<rect x="108" y="53" width="4" height="4" fill="#0000c0"/>
<rect x="107" y="57" width="5" height="4" fill="#0000c0"/>
</g>
<path d="M101.5 49.500c0-1.5 1-2.5 2.500-2.500c1 0 1.5 .5 2.5 .500c1.500-1.5 6-1.800 8.5 0c1.800 1.5 2.5 3.5 2.300 6.200c-1.500-2-3-3-5-3.200l0 2.500l-5 0l0-2.500c-1 .500-2 1.500-3 1.500c-1.5 0-2.800-1-2.800-2.500z" fill="#f0f0f0" stroke="#000"/>
<!-- run -->
<g stroke="#000" fill="none" stroke-linecap="round">
<circle cx="143.5" cy="47.5" r="1.5" stroke-width="1.2"/>
<path d="M142.5 49.500l-4 6" stroke-width="2.600"/>
<path d="M141.5 50.500l-3-1.500l-2.5 2" stroke-width="1.3"/>
<path d="M141.5 51.500l3 1.500l2-1.5" stroke-width="1.3"/>
<path d="M138.5 55.500l-3 1.500l-3-.5" stroke-width="1.5"/>
<path d="M138.5 55.500l3 1.500l-1 3.5" stroke-width="1.5"/>
</g>
<path d="M133 47.500l2-1M133.5 50l1.500-.5" stroke="#808080" stroke-width=".8"/>
<!-- halt hand (disabled) -->
<g transform="translate(156,45)">
<path d="M4.5 15.500l-1-3l-3-3l1.500-1l2.5 2l0-7.500l1.5 0l.5 5l0-7l1.5 0l.5 7l0-6.500l1.5 0l.5 6.500l.3-4.500l1.400 0l.3 8l-1 4z" fill="#fff" stroke="#fff" transform="translate(1,1)"/>
<path d="M4.5 15.500l-1-3l-3-3l1.500-1l2.5 2l0-7.500l1.5 0l.5 5l0-7l1.5 0l.5 7l0-6.500l1.5 0l.5 6.500l.3-4.500l1.400 0l.3 8l-1 4z" fill="#d4d0c8" stroke="#808080"/>
</g>
<!-- zooms -->
<g stroke-linecap="round">
<line x1="196.5" y1="55.5" x2="201.5" y2="60.5" stroke="#000" stroke-width="2.400"/>
<circle cx="192.5" cy="51.5" r="5" fill="#c6e4e0" stroke="#000" stroke-width="1.3"/>
<path d="M189.5 51.500h6M192.5 48.500v6" stroke="#000" stroke-width="1.3" stroke-linecap="butt"/>
<line x1="220.5" y1="56.5" x2="225.5" y2="61.5" stroke="#fff" stroke-width="2.400"/>
<line x1="219.5" y1="55.5" x2="224.5" y2="60.5" stroke="#808080" stroke-width="2.2"/>
<circle cx="216" cy="52" r="5" fill="none" stroke="#fff" stroke-width="1.3"/>
<circle cx="215.5" cy="51.5" r="5" fill="#d8d4cc" stroke="#808080" stroke-width="1.3"/>
<line x1="242.5" y1="55.5" x2="247.5" y2="60.5" stroke="#000" stroke-width="2.400"/>
<circle cx="238.5" cy="51.5" r="5" fill="#c6e4e0" stroke="#000" stroke-width="1.3"/>
<path d="M235.5 51.500h6" stroke="#000" stroke-width="1.3" stroke-linecap="butt"/>
<line x1="265.5" y1="55.5" x2="270.5" y2="60.5" stroke="#000" stroke-width="2.400"/>
<circle cx="261.5" cy="51.5" r="5" fill="#c6e4e0" stroke="#000" stroke-width="1.3"/>
<path d="M255.5 46.500l12 12M268 47l-12.5 10.5" stroke="#e01020" stroke-width="1.400"/>
</g>
<!-- plot icon -->
<g shape-rendering="crispEdges" fill="none">
<path d="M287.5 46v14M286 59.500h16" stroke="#000"/>
<path d="M286 48.500h1M286 51.500h1M286 54.500h1M286 57.500h1M290.5 60v1M293.5 60v1M296.5 60v1M299.5 60v1" stroke="#000"/>
<rect x="288" y="51" width="14" height="3" fill="#f0dce4" stroke="none"/>
<polyline points="288,49 291,46 294,49 297,46 300,49 302,47" stroke="#000" shape-rendering="auto"/>
<polyline points="288,52 292,51.5 296,53 302,52" stroke="#e01030" stroke-width="1" shape-rendering="auto"/>
<polyline points="288,56 293,56 294,57 296,55.5 302,56" stroke="#000080" stroke-width="1" shape-rendering="auto"/>
<!-- disabled plot -->
<path d="M311.5 47v14M310 60.500h16" stroke="#fff"/>
<path d="M310.5 46v14M309 59.500h16" stroke="#808080"/>
<path d="M314 53c0-4 3-6 8-6v11c-5 0-8-2-8-5z" stroke="#fff" transform="translate(1,1)" shape-rendering="auto"/>
<path d="M314 53c0-4 3-6 8-6v11c-5 0-8-2-8-5z" stroke="#808080" shape-rendering="auto"/>
<path d="M323.5 47v11" stroke="#808080"/>
</g>
<!-- tile / cascade / close-all -->
<g shape-rendering="crispEdges">
<rect x="340.5" y="46.5" width="15" height="14" fill="#dcdcdc" stroke="#000080"/>
<rect x="340" y="46" width="16" height="3" fill="#000080"/>
<rect x="340" y="52" width="16" height="4" fill="#000080"/>
<rect x="352" y="47" width="1" height="1" fill="#fff"/><rect x="354" y="47" width="1" height="1" fill="#fff"/>
<rect x="352" y="54" width="1" height="1" fill="#fff"/><rect x="354" y="54" width="1" height="1" fill="#fff"/>
<g>
<rect x="363.5" y="46.5" width="9" height="6" fill="#dcdcdc" stroke="#000080"/><rect x="363" y="46" width="10" height="3" fill="#000080"/>
<rect x="366.5" y="50.5" width="9" height="6" fill="#dcdcdc" stroke="#000080"/><rect x="366" y="50" width="10" height="3" fill="#000080"/>
<rect x="369.5" y="54.5" width="9" height="6" fill="#dcdcdc" stroke="#000080"/><rect x="369" y="54" width="10" height="3" fill="#000080"/>
</g>
<rect x="386.5" y="46.5" width="7" height="6" fill="#dcdcdc" stroke="#000080"/><rect x="386" y="46" width="8" height="3" fill="#000080"/>
<rect x="389.5" y="50.5" width="7" height="6" fill="#dcdcdc" stroke="#000080"/><rect x="389" y="50" width="8" height="3" fill="#000080"/>
<rect x="392.5" y="54.5" width="7" height="6" fill="#dcdcdc" stroke="#000080"/><rect x="392" y="54" width="8" height="3" fill="#000080"/>
<rect x="394" y="58" width="4" height="1" fill="#000080"/>
<path d="M398.5 46.500h3M398.5 46.500v3M398.5 46.500l3.5 3.5" stroke="#000" fill="none"/>
</g>
<!-- scissors -->
<g fill="none">
<path d="M423 46l3.200 8M428.5 46l-3.200 8" stroke="#000" stroke-width="1.3"/>
<ellipse cx="422.800" cy="57" rx="1.700" ry="2.400" stroke="#000090" stroke-width="1.2"/>
<ellipse cx="428.5" cy="57" rx="1.700" ry="2.400" stroke="#000090" stroke-width="1.2"/>
</g>
<g shape-rendering="crispEdges">
<!-- copy -->
<polygon points="441.5,46.5 445.5,46.5 447.5,48.5 447.5,55.5 441.5,55.5" fill="#fff" stroke="#000"/>
<path d="M443 49.500h3M443 51.500h3M443 53.500h3" stroke="#000"/>
<polygon points="447.5,49.5 452.5,49.5 455.5,52.5 455.5,58.5 447.5,58.5" fill="#fff" stroke="#000080"/>
<path d="M449 52.500h4M449 54.500h5M449 56.500h5" stroke="#000"/>
<!-- paste disabled -->
<rect x="465" y="48" width="12" height="12" fill="#fff"/>
<rect x="464" y="47" width="12" height="12" fill="#808080"/>
<rect x="468" y="46" width="4" height="2" fill="#808080"/>
<rect x="467" y="49" width="6" height="1" fill="#fff"/>
<rect x="470.5" y="52.5" width="7" height="6" fill="#d4d0c8" stroke="#fff"/>
<path d="M472 54.500h4M472 56.500h4" stroke="#fff"/>
<!-- binoculars -->
<path d="M490 47h3v2h1v2h2v-2h1v-2h3v2h1v3h1v3h1v6h-6v-6h-1v-2h-2v2h-1v6h-6v-6h1v-3h1v-3h1z" fill="#000"/>
<rect x="491" y="48" width="1" height="1" fill="#fff"/><rect x="498" y="48" width="1" height="1" fill="#fff"/>
<rect x="489" y="55" width="1" height="3" fill="#fff"/><rect x="491" y="52" width="1" height="2" fill="#fff"/>
<rect x="497" y="55" width="1" height="3" fill="#fff"/><rect x="499" y="52" width="1" height="2" fill="#fff"/>
</g>
<g shape-rendering="crispEdges">
<!-- print setup -->
<polygon points="521.5,46.5 529.5,46.5 531.5,50.5 519.5,50.5" fill="#fff" stroke="#000"/>
<path d="M523 47.500l2 2l2-2" stroke="#000" fill="none"/>
<rect x="518.5" y="50.5" width="14" height="8" fill="#e4e4e4" stroke="#000"/>
<path d="M520 52.500h11M521 54.500h10M520 56.500h11" stroke="#9a9a9a" stroke-dasharray="1 1"/>
<rect x="521" y="59" width="10" height="1" fill="#000"/>
<!-- print -->
<polygon points="544.5,46.5 552.5,46.5 550.5,51.5 542.5,51.5" fill="#fff" stroke="#000"/>
<path d="M545 48.500h5M544 50.500h5" stroke="#808080"/>
<polygon points="540.5,54.5 543.5,51.5 553.5,51.5 555.5,53.5 555.5,57.5 553.5,59.5 540.5,59.5" fill="#d8d8d8" stroke="#000"/>
<path d="M541 54.500h12M541 57.500h12" stroke="#000"/>
<rect x="542" y="55" width="10" height="2" fill="#fff"/>
<path d="M553.5 54.500l2-1" stroke="#000"/>
</g>
<!-- wire pencil -->
<path d="M573 59.500h14" stroke="#0000e0" stroke-width="1.2"/>
<path d="M574.5 56.500l6.500-9" stroke="#000" stroke-width="3"/>
<path d="M575.300 55.300l5-7" stroke="#ffe81a" stroke-width="1.400"/>
<path d="M573.5 58.500l1.500-3l1.800 1.200z" fill="#000" stroke="#000" stroke-width=".6"/>
<path d="M580.300 47.800l1.600-1.800" stroke="#000" stroke-width="2.800"/>
<!-- ground -->
<g shape-rendering="crispEdges">
<path d="M601.5 46v7" stroke="#000"/>
</g>
<polygon points="595,53.5 608.5,53.5 601.700,60.3" fill="#b4b478" stroke="#000"/>
<!-- label -->
<rect x="617.5" y="47.5" width="14" height="9" rx="1.5" fill="#c8c8a4" stroke="#000" stroke-width="1.2"/>
<path d="M624.5 57v4" stroke="#000" shape-rendering="crispEdges"/>
<text x="624.5" y="55" font-family="Liberation Sans,sans-serif" font-weight="bold" font-size="8.5" text-anchor="middle" fill="#000">A</text>
<!-- resistor, cap, inductor, diode, gate -->
<g fill="none" stroke="#000" stroke-width="1.2">
<polyline points="647.300,46 648.300,47.700 653,50.300 643.800,55.700 648,58 648.300,60.3"/>
<path d="M670.5 46v6M670.5 56v5M665 52.500h11M665 55.700h11"/>
<path d="M691.5 46.500c6 0 6 7 0 7c6 0 6 7 0 7"/>
<path d="M717.5 46v15M710 57.700h15"/>
<polygon points="710.5,49.700 724.5,49.700 717.5,57" fill="#c0c0c0"/>
<path d="M732 50.300h3.500M732 56.300h3.500M744 53.300h4"/>
<path d="M735.5 48.700h4c6 0 6 9.5 0 9.500h-4z" fill="#c0c0c0"/>
</g>
<!-- hands, undo, redo -->
<path d="M760.5 60.500l-1-2.500l-4-4.500l1.500-1.500l3 2l-2.500-6l1.500-1.500l3 5l.5-4.500l1.800-.5l1 5l2.500-5.500l1.800.5l-1.300 6l2.200-2l1.5 1.200l-2.5 5l-2 3.800z" fill="#fff" stroke="#000" stroke-width="1.2" stroke-linejoin="round"/>
<path d="M782.5 59.500l-.5-2.500l-2.500-3l1-1.500l2 1l0-3.500l1.800-1l1.200 1.500l1-2l2 0l.8 2l1.500-1l1.5 1l.3 3.500l-2 3.500l-.3 2z" fill="#fff" stroke="#000" stroke-width="1.2" stroke-linejoin="round"/>
<path d="M785 50.500v3M787.800 50v3.500M790 51v3" stroke="#000" stroke-width="1" fill="none"/>
<path d="M805 52a5.300 5.300 0 1 1 3.5 6.5" fill="none" stroke="#202000" stroke-width="1.3"/>
<path d="M802.300 50.500l.6 4.300l4-1.600z" fill="#000"/>
<g transform="translate(1,1)"><path d="M836.5 52a5.300 5.300 0 1 0 -3.5 6.5" fill="none" stroke="#fff" stroke-width="1.3"/><path d="M839.300 50.500l-.6 4.300l-4-1.600z" fill="#fff"/></g>
<path d="M836.5 52a5.300 5.300 0 1 0 -3.5 6.5" fill="none" stroke="#808080" stroke-width="1.3"/>
<path d="M839.300 50.500l-.6 4.300l-4-1.600z" fill="#808080"/>
<!-- rotate / mirror (disabled), Aa, .op -->
<g fill="none" shape-rendering="crispEdges">
<g stroke="#808080">
<path d="M848 52.500h4M848 56.500h3M848 60.500h4" /><path d="M848 52v9" stroke-width="2"/>
<path d="M854.5 55v5M858.5 56v4M862.5 55v5" /><path d="M854 55h9" stroke-width="2"/>
</g>
<path d="M849.5 50.500c1-4 6-5 10-3.5" stroke="#808080" shape-rendering="auto"/>
<path d="M858 45l3 2.500l-3.5 1.500z" fill="#808080" stroke="none" shape-rendering="auto"/>
<g stroke="#fff"><path d="M852.5 53.500v3M852 61.500h-3M855.5 61v-4M863.5 56v5"/></g>
<g stroke="#808080">
<path d="M871 52.500h4M871 56.500h3M871 60.500h4"/><path d="M871 52v9" stroke-width="2"/>
<path d="M882 52.500h4M883 56.500h3M882 60.500h4"/><path d="M886 52v9" stroke-width="2"/>
</g>
<path d="M872.5 50.500c1-4 7-5 11-3" stroke="#808080" shape-rendering="auto"/>
<path d="M882 45l3 3l-4 1z" fill="#808080" stroke="none" shape-rendering="auto"/>
<g stroke="#fff"><path d="M875.5 53.500v3M875 61.500h-3M887.5 53v9M882 61.500h5"/></g>
</g>
<text x="893" y="58.5" font-family="Liberation Serif,serif" font-weight="bold" font-style="italic" font-size="12.600" fill="#000">Aa</text>
<text x="916.5" y="56" font-family="Liberation Sans,sans-serif" font-size="10.5" fill="#000" stroke="#000" stroke-width=".3">.op</text>
<!-- ============ taskbar icons ============ -->
<!-- windows flag -->
<path d="M7 777.500c2-1 4-1 5.5 0l-1 4.500c-1.500-1-3.500-1-5.5 0z" fill="#e8602c"/>
<path d="M13.5 778c2 1 4 1 6 0l-1.200 5c-2 1-4 1-6 0z" fill="#7cc828"/>
<path d="M5.5 783.500c2-1 4-1 5.5 0l-1 4.500c-1.500-1-3.500-1-5.5 0z" fill="#3870e0"/>
<path d="M12 784c2 1 4 1 6 0l-1.200 5c-2 1-4 1-6 0z" fill="#f8d020"/>
<!-- firefox -->
<circle cx="70.3" cy="784.800" r="7.3" fill="#e8641c"/>
<circle cx="71.3" cy="783.3" r="4.3" fill="#2a6cc8"/>
<path d="M63.5 782c1 4 4 6 8 5c3-1 4-3 5-5c1 5-2 10-7 10c-4 0-7-4-6-10z" fill="#f09020"/>
<path d="M66 779c2-1 4 0 5 2l-3 2c-1-1-2-2-2-4z" fill="#e8641c"/>
<!-- folders -->
<g>
<path d="M225 780.500c0-1 .5-1.5 1.500-1.500h3.500l1.5 1.500h6.500c1 0 1.500.5 1.5 1.500v7c0 1-.5 1.500-1.5 1.500h-11.500c-1 0-1.500-.5-1.500-1.500z" fill="#f4dc6c" stroke="#b8962c"/>
<path d="M226 783.500h12.5" stroke="#fdf4b8" stroke-width="1.5"/>
</g>
<g transform="translate(163,0)">
<path d="M225 780.500c0-1 .5-1.5 1.500-1.500h3.500l1.5 1.500h6.500c1 0 1.500.5 1.5 1.500v7c0 1-.5 1.500-1.5 1.500h-11.500c-1 0-1.500-.5-1.500-1.500z" fill="#f4dc6c" stroke="#b8962c"/>
<path d="M226 783.500h12.5" stroke="#fdf4b8" stroke-width="1.5"/>
</g>
<!-- picture icon -->
<g shape-rendering="crispEdges">
<rect x="714.5" y="777.5" width="14" height="13" fill="#3c84d8" stroke="#7c8c9c"/>
<rect x="715" y="778" width="13" height="3" fill="#7cb4f0"/>
</g>
<path d="M715 785l5-3l8 4v4.500h-13z" fill="#106c18"/>
<path d="M720 790.500l8-4v4z" fill="#a8d848"/>
<!-- EN -->
<rect x="1146" y="778" width="12" height="15" fill="#0a246a" shape-rendering="crispEdges"/>
<text x="1147" y="790" font-family="Liberation Sans,sans-serif" font-size="11" fill="#fff">EN</text>
<rect x="1158" y="777" width="4" height="17" fill="#d4d0c8" shape-rendering="crispEdges"/>
<!-- network -->
<g shape-rendering="crispEdges">
<rect x="1171" y="778" width="8" height="8" fill="#28328c"/><rect x="1172" y="779" width="6" height="5" fill="#5864b8"/>
<rect x="1166" y="782" width="8" height="8" fill="#28328c"/><rect x="1167" y="783" width="6" height="5" fill="#4858b0"/>
<rect x="1168" y="790" width="5" height="2" fill="#c8ccdc"/><rect x="1174" y="786" width="4" height="2" fill="#c8ccdc"/>
</g>
<!-- speaker -->
<circle cx="1189" cy="784.5" r="5.5" fill="#707478"/>
<circle cx="1188.5" cy="784" r="2.800" fill="#a8acb0"/>
<circle cx="1188.5" cy="784" r="1.2" fill="#484c50"/>
<path d="M1194 789c1.500-1 2.500-2.5 2.500-4.5" stroke="#8890d0" fill="none"/>
<!-- shield -->
<path d="M1203 778c2 .5 4 0 6-1c2 1 4 1.5 6 1v8c0 3-3 6-6 7.500c-3-1.500-6-4.500-6-7.500z" fill="#1c64c8"/>
<path d="M1205.5 780.500h7v6c0 2-2 3.500-3.5 4.500c-1.500-1-3.500-2.500-3.500-4.500z" fill="#fff"/>
<path d="M1206.5 781.500l2.5 6.500l2.500-6.5" stroke="#e02818" stroke-width="1.800" fill="none"/>
<!-- usb -->
<path d="M1219.5 778c.5 5 2 8 6 9" stroke="#303030" stroke-width="1.3" fill="none"/>
<path d="M1223 786l6 1.500l1 3l-5 .5z" fill="#b8bcc0" stroke="#606468" stroke-width=".8"/>
<path d="M1229 787.500l5 1l.5 3l-4.5 .5z" fill="#a8c830" stroke="#687818" stroke-width=".8"/>
</svg>
</body>
</html>
